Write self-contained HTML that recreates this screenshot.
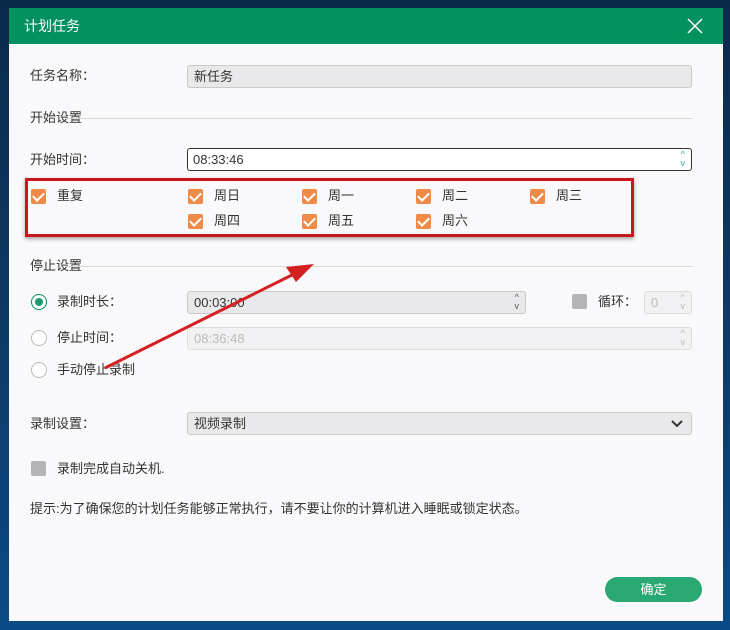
<!DOCTYPE html>
<html><head><meta charset="utf-8"><style>
*{margin:0;padding:0;box-sizing:border-box}
body{width:730px;height:630px;overflow:hidden;background:linear-gradient(180deg,#0b2a4a 0%,#0e3c6a 60%,#0a4a86 100%);font-family:"Liberation Sans","Noto Sans CJK SC",sans-serif;font-size:13px;color:#333;position:relative}
.dlg{position:absolute;left:9px;top:8px;width:714px;height:613px;background:#f9f8fb}
.hd{position:absolute;left:0;top:0;width:714px;height:36px;background:#039160;color:#fff;font-size:14px}
.hd span{position:absolute;left:15px;top:10px;line-height:16px}
.a{position:absolute;white-space:nowrap;line-height:16px}
.inp{position:absolute;border:1px solid #c9c9c9;background:#e9e8ea;border-radius:3px;height:23px;padding:3px 6px;font-size:13px;line-height:15px}
.line{position:absolute;height:1px;background:#d8d8d8}
.cb{position:absolute;width:15px;height:15px;background:#f08a48;border-radius:2px}
.cb:after{content:"";position:absolute;left:4px;top:1px;width:5px;height:9px;border:solid #fff;border-width:0 2px 2px 0;transform:rotate(45deg)}
.gb{position:absolute;width:15px;height:15px;background:#b4b3b6;border-radius:2px}
.rd{position:absolute;width:16px;height:16px;border:1px solid #bbb;border-radius:50%;background:#fff}
.sp{position:absolute;right:6px;font-size:9px;color:#555;line-height:9px;text-align:center}
</style></head><body>
<div class="dlg">
<div class="hd"><span>计划任务</span>
<svg style="position:absolute;left:678px;top:10px" width="16" height="16"><path d="M1 1L15 15M15 1L1 15" stroke="#fff" stroke-width="1.5"/></svg></div>
<div class="a" style="left:21px;top:60px">任务名称：</div>
<div class="inp" style="left:178px;top:57px;width:505px">新任务</div>
<div class="a" style="left:21px;top:102px">开始设置</div>
<div class="line" style="left:56px;top:110px;width:627px"></div>
<div class="a" style="left:21px;top:144px">开始时间：</div>
<div class="inp" style="left:178px;top:140px;width:505px;background:#fff;border-color:#333;padding-left:5px">08:33:46<div class="sp" style="top:1px;color:#3a9">^<br>v</div></div>
<div class="a" style="left:16px;top:170px;width:609px;height:59px;border:3px solid #c8161d;box-shadow:0 2px 4px rgba(0,0,0,.35)"></div>
<div class="cb" style="left:22px;top:181px"></div><div class="a" style="left:48px;top:180px">重复</div>
<div class="cb" style="left:179px;top:181px"></div><div class="a" style="left:205px;top:180px">周日</div>
<div class="cb" style="left:293px;top:181px"></div><div class="a" style="left:319px;top:180px">周一</div>
<div class="cb" style="left:407px;top:181px"></div><div class="a" style="left:433px;top:180px">周二</div>
<div class="cb" style="left:521px;top:181px"></div><div class="a" style="left:547px;top:180px">周三</div>
<div class="cb" style="left:179px;top:206px"></div><div class="a" style="left:205px;top:205px">周四</div>
<div class="cb" style="left:293px;top:206px"></div><div class="a" style="left:319px;top:205px">周五</div>
<div class="cb" style="left:407px;top:206px"></div><div class="a" style="left:433px;top:205px">周六</div>
<div class="a" style="left:21px;top:250px">停止设置</div>
<div class="line" style="left:56px;top:258px;width:627px"></div>
<div class="rd" style="left:22px;top:286px;border-color:#039160"><div style="position:absolute;left:3px;top:3px;width:8px;height:8px;border-radius:50%;background:#1a9b70"></div></div>
<div class="a" style="left:48px;top:286px">录制时长：</div>
<div class="inp" style="left:178px;top:283px;width:339px">00:03:00<div class="sp" style="top:1px">^<br>v</div></div>
<div class="gb" style="left:563px;top:286px"></div>
<div class="a" style="left:589px;top:286px">循环：</div>
<div class="inp" style="left:635px;top:283px;width:48px;background:#f1f0f2;color:#bbb;border-color:#ddd">0<div class="sp" style="top:1px;color:#bbb">^<br>v</div></div>
<div class="rd" style="left:22px;top:322px"></div>
<div class="a" style="left:48px;top:322px">停止时间：</div>
<div class="inp" style="left:178px;top:319px;width:505px;background:#f1f0f2;color:#bbb;border-color:#ddd">08:36:48<div class="sp" style="top:1px;color:#bbb">^<br>v</div></div>
<div class="rd" style="left:22px;top:354px"></div>
<div class="a" style="left:48px;top:354px">手动停止录制</div>
<div class="a" style="left:21px;top:408px">录制设置：</div>
<div class="inp" style="left:178px;top:404px;width:505px">视频录制
<svg style="position:absolute;right:8px;top:7px" width="12" height="8"><path d="M1 1L6 6L11 1" stroke="#333" stroke-width="2" fill="none"/></svg></div>
<div class="gb" style="left:22px;top:453px"></div>
<div class="a" style="left:48px;top:453px">录制完成自动关机.</div>
<div class="a" style="left:21px;top:493px">提示:为了确保您的计划任务能够正常执行，请不要让你的计算机进入睡眠或锁定状态。</div>
<div class="a" style="left:596px;top:569px;width:97px;height:25px;background:#2aa873;border-radius:13px;color:#fff;text-align:center;line-height:25px">确定</div>
</div>
<svg style="position:absolute;left:0;top:0" width="730" height="630"><path d="M105 368L298 272" stroke="#d42020" stroke-width="3"/><path d="M314 264L286 267L296 282Z" fill="#d42020"/></svg>
</body></html>
